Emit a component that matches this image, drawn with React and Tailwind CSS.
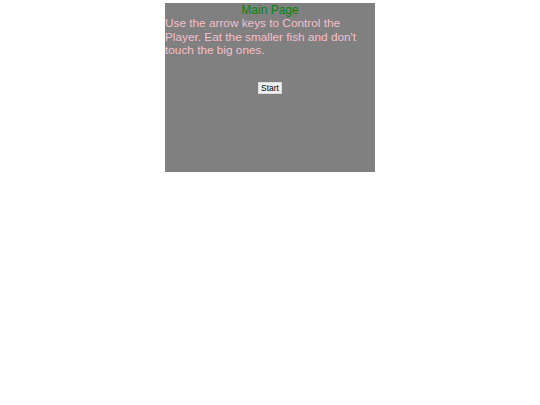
import React from 'react';

export default function App() {
    return (
        <div className="w-full pt-[3px] flex justify-center" style={{ fontFamily: '"Liberation Sans", Arial, sans-serif' }}>
            {/* game screen */}
            <div className="w-[210px] h-[169px] bg-[#808080] flex flex-col">
                <h1 className="text-[12px] leading-[14px] text-[#0a850a] text-center">Main Page</h1>
                <p className="text-[11.8px] leading-[13.7px] text-[#f5bfcb]">
                    Use the arrow keys to Control the Player. Eat the smaller fish and don't touch the big ones.
                </p>
                <div className="flex justify-center mt-[24px]">
                    <button className="h-[12px] px-[2px] bg-[#f0f0f0] border border-[#dcdcdc] text-[8.5px] leading-[10px] text-black">
                        Start
                    </button>
                </div>
            </div>
        </div>
    );
}
